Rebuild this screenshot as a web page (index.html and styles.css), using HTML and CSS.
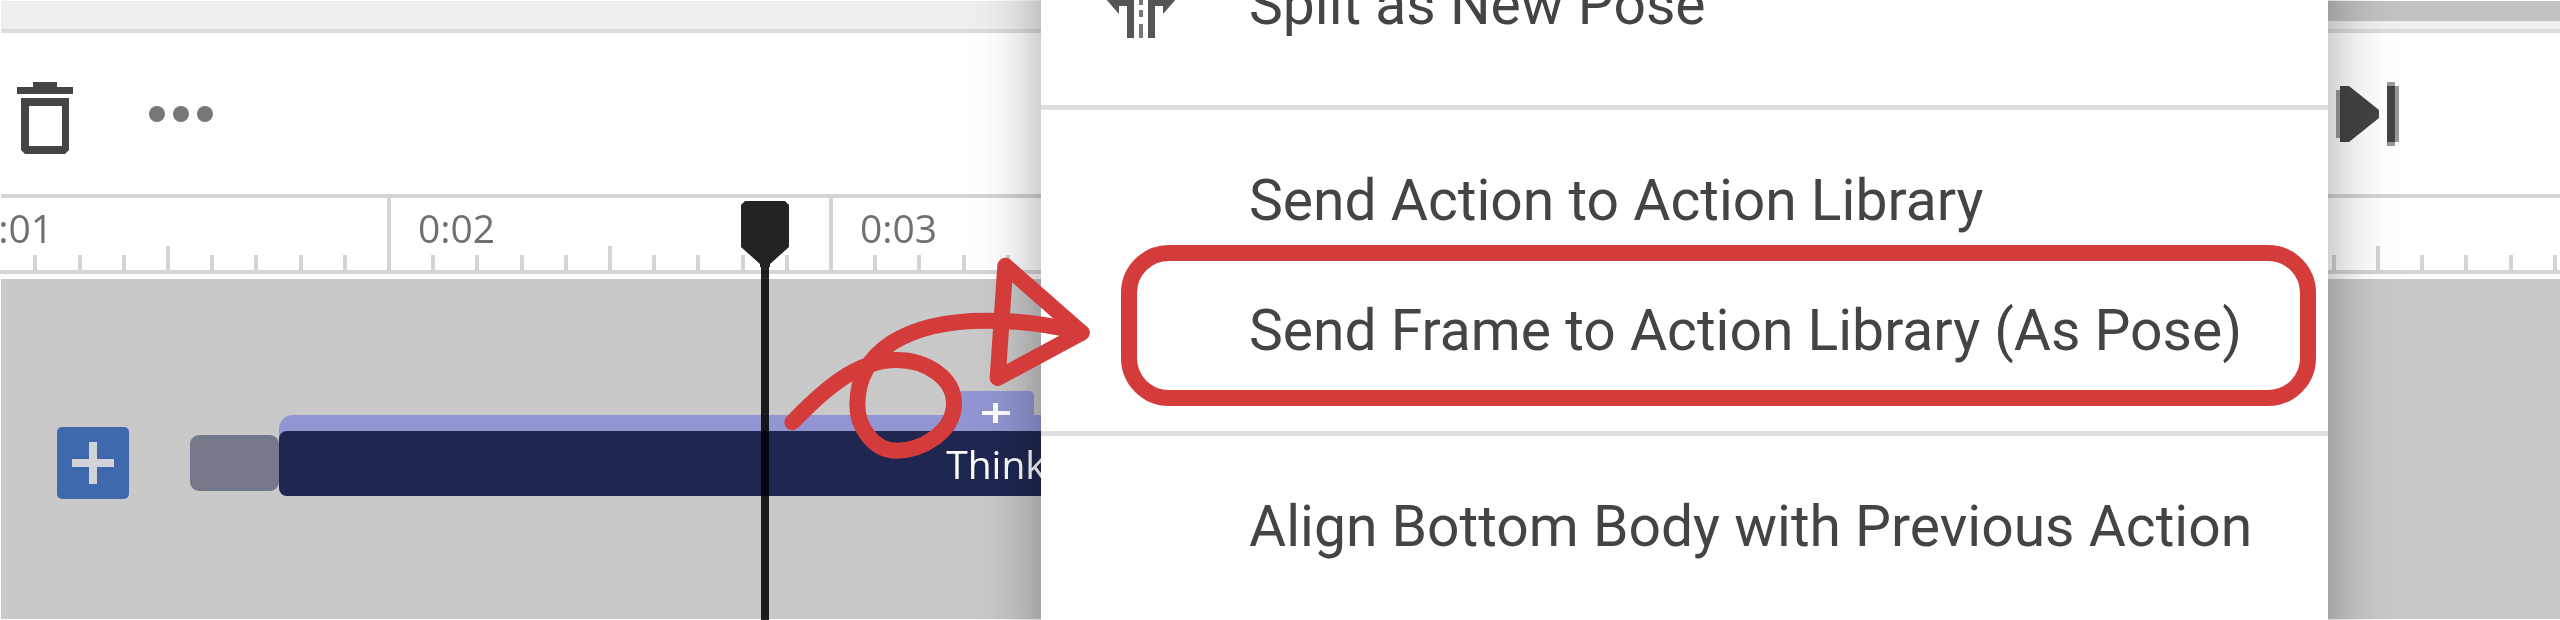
FILE: index.html
```html
<!DOCTYPE html>
<html lang="en">
<head>
  <meta charset="utf-8">
  <title>Action Timeline</title>
  <meta name="viewport" content="width=device-width, initial-scale=1">
  <link rel="stylesheet" href="styles.css">
</head>
<body>
  <div class="app">
    <div class="panel-edge"><div class="panel-scroll"></div></div>

    <div class="toolbar">
      <button class="tool" aria-label="Delete">
        <svg width="56" height="72" viewBox="0 0 56 72">
          <path fill="#444" d="M16 0h24v5h16v7H0V5h16z"/>
          <path fill="#444" fill-rule="evenodd" d="M4 16h48v52l-4 4H8l-4-4zM12 24v40h33V24z"/>
        </svg>
      </button>
      <button class="tool" aria-label="More">
        <svg width="66" height="18" viewBox="0 0 66 18" fill="#777">
          <circle cx="9" cy="9" r="8"/><circle cx="33" cy="9" r="8"/><circle cx="57" cy="9" r="8"/>
        </svg>
      </button>
      <button class="tool tool-next" aria-label="Next frame">
        <svg width="64" height="64" viewBox="0 0 64 64" fill="#444">
          <path fill="#999" d="M0 8h4v48H0z"/>
          <path d="M4 4h9l30 24v8L13 60H4z"/>
          <path fill="#999" d="M51 0h8v4h4v56h-4v4h-8z"/>
          <path d="M51 4h8v56h-8z"/>
        </svg>
      </button>
    </div>

    <div class="ruler" id="ruler"></div>

    <div class="tracks">
      <div class="track">
        <button class="add" aria-label="Add action">
          <svg width="42" height="42" viewBox="0 0 42 42"><path fill="#d0d3d8" d="M17 0h8v17h17v8H25v17h-8V25H0v-8h17z"/></svg>
        </button>
        <div class="clip-stub"></div>
        <div class="clip">
          <span class="clip-name">Think</span>
          <button class="clip-add" aria-label="Add motion">
            <svg width="28" height="20" viewBox="0 0 28 20"><path fill="#fff" d="M11 0h5v8h12v4H16v8h-5v-8H0V8h11z"/></svg>
          </button>
        </div>
      </div>
    </div>

    <div class="playhead">
      <svg width="48" height="66" viewBox="0 0 48 66"><path fill="#232323" d="M4 0h40l4 4v42L29 63v3H19v-3L0 46V4z"/></svg>
      <div class="playhead-line"></div>
    </div>

    <div class="menu" role="menu">
      <button class="item" role="menuitem">
        <svg class="item-icon" width="72" height="84" viewBox="0 0 72 84" fill="#555">
          <path d="M0 42L14 58v-8h8v32h7V42z"/>
          <path d="M72 42L58 58v-8h-8v32h-7V42z"/>
          <path fill="#777" d="M34 0h4v10h-4zM34 16h4v10h-4zM34 32h4v17h-4zM34 54h4v7h-4zM34 68h4v14h-4z"/>
        </svg>
        Split as New Pose
      </button>
      <hr>
      <button class="item" role="menuitem">Send Action to Action Library</button>
      <button class="item item-marked" role="menuitem">Send Frame to Action Library (As Pose)</button>
      <hr>
      <button class="item" role="menuitem">Align Bottom Body with Previous Action</button>
    </div>

    <svg class="arrow" width="440" height="300" viewBox="0 0 1320 900">
      <path d="M157 607C250 510 350 420 470 420C560 420 642 475 642 550C642 640 540 692 470 692C400 692 352 620 352 555C352 395 500 302 740 302C860 302 940 318 1025 338"/>
      <path d="M796 137L1025 338L773 474z"/>
    </svg>
  </div>

  <script>
    // one block per second, ten ticks in each
    const ruler = document.getElementById('ruler');
    const labels = ['0:01', '0:02', '0:03', '', '', ''];
    labels.forEach(label => {
      const second = document.createElement('div');
      second.className = 'second';
      second.innerHTML = `<span class="time">${label}</span>` + '<i class="tick"></i>'.repeat(10);
      ruler.appendChild(second);
    });
  </script>
</body>
</html>
```

FILE: styles.css
```css
* {
  box-sizing: border-box;
}
body {
  margin: 0;
  background: #fff;
  font-family: "Open Sans", sans-serif;
}
button {
  margin: 0;
  padding: 0;
  border: 0;
  background: none;
  font: inherit;
  color: inherit;
}
svg {
  display: block;
}
.app {
  position: relative;
  display: flex;
  flex-direction: column;
  min-height: 100vh;
  padding: 1px 0 1px 1px;
  overflow: hidden;
}

/* bottom edge of the stage above the timeline */
.panel-edge {
  display: flex;
  justify-content: flex-end;
  height: 32px;
  background: #efefef;
  border-bottom: 4px solid #dcdcdc;
}
.panel-scroll {
  width: 40%;
  height: 20px;
  background: #c2c2c2;
}

.toolbar {
  display: flex;
  align-items: center;
  gap: 75px;
  height: 165px;
  padding: 0 160px 0 16px;
  border-bottom: 4px solid #d4d4d4;
}
.tool:first-child {
  padding-top: 8px;
}
.tool-next {
  margin-left: auto;
}

.ruler {
  display: flex;
  height: 76px;
  margin-left: -56px;
  border-bottom: 4px solid #d4d4d4;
}
.second {
  position: relative;
  display: flex;
  flex: none;
  align-items: flex-end;
  width: 442px;
}
.time {
  position: absolute;
  top: 3px;
  left: 31px;
  font-size: 39px;
  line-height: 54px;
  color: #707070;
}
.tick {
  flex: 1;
  height: 15px;
  border-left: 4px solid #d4d4d4;
}
.tick:nth-of-type(1) {
  height: 100%;
}
.tick:nth-of-type(6) {
  height: 24px;
}

.tracks {
  flex: 1;
  margin-top: 5px;
  padding-top: 132px;
  background: #c9c9c9;
}
.track {
  display: flex;
  align-items: center;
  padding-left: 56px;
}
.add {
  display: flex;
  align-items: center;
  justify-content: center;
  width: 72px;
  height: 72px;
  margin-top: 16px;
  border-radius: 5px;
  background: #3f68ad;
}
.clip-stub {
  width: 89px;
  height: 56px;
  margin-top: 16px;
  margin-left: 61px;
  border-radius: 9px;
  background: #74788a;
}
.clip {
  position: relative;
  width: 1434px;
  padding-top: 16px;
  border-radius: 14px 14px 8px 8px;
  background: #9196d3;
}
.clip-name {
  display: block;
  border-radius: 8px;
  background: #1f2751;
  font-size: 39px;
  font-weight: 500;
  line-height: 65px;
  text-align: center;
  color: #fff;
}
.clip-add {
  position: absolute;
  top: -24px;
  left: 679px;
  display: flex;
  align-items: center;
  justify-content: center;
  width: 76px;
  height: 40px;
  padding-top: 4px;
  border-radius: 5px 5px 0 0;
  background: #9196d3;
}

.playhead {
  position: absolute;
  top: 201px;
  bottom: 0;
  left: 741px;
  width: 48px;
  mix-blend-mode: multiply;
}
.playhead-line {
  position: absolute;
  top: 62px;
  bottom: 0;
  left: 20px;
  width: 8px;
  background: #232323;
}

.menu {
  position: absolute;
  top: -60px;
  bottom: -60px;
  left: 1041px;
  width: 1287px;
  background: #fff;
  box-shadow: 0 0 60px rgba(0, 0, 0, 0.36);
}
.item {
  position: relative;
  display: block;
  width: 100%;
  padding-left: 208px;
  font-family: Roboto, sans-serif;
  font-size: 57px;
  line-height: 130px;
  text-align: left;
  white-space: nowrap;
  color: #444;
}
.item-icon {
  position: absolute;
  top: 16px;
  left: 64px;
}
.menu hr {
  height: 5px;
  margin: 35px 0 26px;
  border: 0;
  background: #dfdfdf;
}
.item-marked::after {
  content: "";
  position: absolute;
  top: -21px;
  right: 12px;
  bottom: -10px;
  left: 80px;
  border: 16px solid #d43b3b;
  border-radius: 48px;
}

.arrow {
  position: absolute;
  top: 220px;
  left: 740px;
  fill: none;
  stroke: #d43b3b;
  stroke-width: 48;
  stroke-linecap: round;
  stroke-linejoin: round;
}
```
